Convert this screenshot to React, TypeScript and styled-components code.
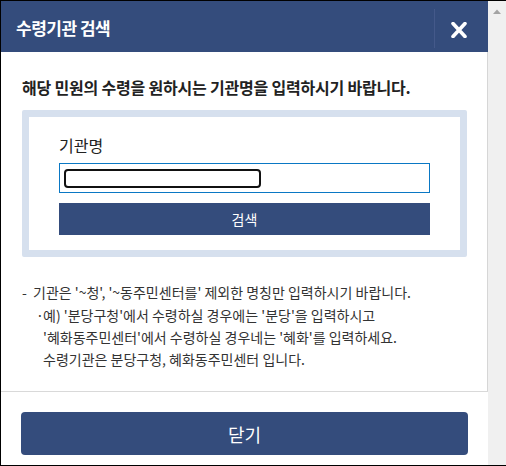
import React from 'react'
import styled, { createGlobalStyle } from 'styled-components'

const NAVY = '#344c7c'
const KR = `'Noto Sans CJK KR', 'Noto Sans', sans-serif`

const GlobalStyle = createGlobalStyle`
    * {
        box-sizing: border-box;
    }

    body {
        margin: 0;
        background: #fff;
        font-family: ${KR};
    }
`

export default function App() {
    return (
        <>
            <GlobalStyle />
            <Frame>
                <Dialog>
                    <Header>
                        <Title>수령기관 검색</Title>
                        <CloseIcon type="button" aria-label="닫기">
                            <svg width="18" height="16" viewBox="0 0 18 16">
                                <path
                                    d="M3 1.5 L15 14.5 M15 1.5 L3 14.5"
                                    stroke="#fff"
                                    strokeWidth="3.6"
                                    strokeLinecap="round"
                                />
                            </svg>
                        </CloseIcon>
                    </Header>
                    <Body>
                        <Lead>
                            해당 민원의 수령을 원하시는 기관명을 입력하시기
                            바랍니다.
                        </Lead>
                        <SearchBox>
                            <Label>기관명</Label>
                            <InputField>
                                <Redacted />
                            </InputField>
                            <SearchButton type="button">검색</SearchButton>
                        </SearchBox>
                        <Notes>
                            <Note>
                                <Marker $width={11}>-</Marker>
                                <span>
                                    기관은 '~청', '~동주민센터를' 제외한 명칭만
                                    입력하시기 바랍니다.
                                </span>
                            </Note>
                            <SubNote>
                                <Marker $width={7}>·</Marker>
                                <span>
                                    예) '분당구청'에서 수령하실 경우에는 '분당'을
                                    입력하시고
                                    <br />
                                    '혜화동주민센터'에서 수령하실 경우네는
                                    '혜화'를 입력하세요.
                                    <br />
                                    수령기관은 분당구청, 혜화동주민센터 입니다.
                                </span>
                            </SubNote>
                        </Notes>
                    </Body>
                    <Footer>
                        <CloseButton type="button">닫기</CloseButton>
                    </Footer>
                </Dialog>
                <Scrollbar>
                    <svg width="8" height="5" viewBox="0 0 8 5">
                        <path d="M0 5 L4 0.5 L8 5 Z" fill="#a3a3a3" />
                    </svg>
                </Scrollbar>
            </Frame>
        </>
    )
}

const Frame = styled.div`
    display: flex;
    width: 506px;
    height: 466px;
    border-top: 1px solid #000;
    border-left: 1px solid #000;
    border-bottom: 1px solid #000;
    overflow: hidden;
`

const Dialog = styled.div`
    display: flex;
    flex-direction: column;
    flex-shrink: 0;
    width: 487px;
    background: #fff;
`

const Header = styled.div`
    display: flex;
    align-items: center;
    justify-content: space-between;
    flex-shrink: 0;
    height: 51px;
    padding-left: 15px;
    background: ${NAVY};
`

const Title = styled.h1`
    margin: 2px 0 0;
    color: #fff;
    font-size: 17px;
    font-weight: 700;
    letter-spacing: -0.5px;
    line-height: 20px;
`

const CloseIcon = styled.button`
    display: flex;
    align-items: center;
    justify-content: center;
    width: 54px;
    height: 39px;
    margin-top: 3px;
    padding: 3px 5px 0 0;
    border: 0;
    border-left: 1px solid #44598a;
    background: transparent;
    cursor: pointer;
`

const Body = styled.div`
    flex-grow: 1;
    padding: 25px 0 0 21px;
    border-right: 1px solid #d6d6d6;
`

const Lead = styled.p`
    margin: 0 0 13px;
    color: #222;
    font-size: 16px;
    font-weight: 700;
    letter-spacing: -0.2px;
    line-height: 20px;
`

const SearchBox = styled.div`
    display: flex;
    flex-direction: column;
    width: 445px;
    padding: 18px 30px 15px;
    border: 7px solid #d6e0ee;
    border-radius: 2px;
`

const Label = styled.label`
    margin-bottom: 8px;
    color: #222;
    font-size: 16px;
    line-height: 20px;
`

const InputField = styled.div`
    display: flex;
    align-items: center;
    height: 30px;
    padding: 0 4px;
    border: 1px solid #0a78c4;
    background: #fff;
`

const Redacted = styled.span`
    display: block;
    width: 197px;
    height: 19px;
    margin-top: 1px;
    border: 2px solid #111;
    border-radius: 4px;
`

const SearchButton = styled.button`
    height: 32px;
    margin-top: 10px;
    border: 0;
    background: ${NAVY};
    color: #fff;
    font-family: ${KR};
    font-size: 14px;
    line-height: 20px;
`

const Notes = styled.ul`
    margin: 24px 0 0;
    padding: 0;
    list-style: none;
    color: #333;
    font-size: 14px;
    line-height: 22px;
`

const Note = styled.li`
    display: flex;
`

const SubNote = styled(Note)`
    margin-top: 1px;
    padding-left: 14px;
`

const Marker = styled.span<{ $width: number }>`
    flex-shrink: 0;
    width: ${({ $width }) => $width}px;
`

const Footer = styled.div`
    flex-shrink: 0;
    height: 74px;
    padding: 20px 0 0 20px;
    border-top: 1px solid #d9d9d9;
`

const CloseButton = styled.button`
    width: 447px;
    height: 43px;
    border: 0;
    border-radius: 4px;
    background: ${NAVY};
    color: #fff;
    font-family: ${KR};
    font-size: 18px;
    line-height: 24px;
`

const Scrollbar = styled.div`
    display: flex;
    justify-content: center;
    flex-grow: 1;
    padding-top: 8px;
    background: #f0f0f0;
`
